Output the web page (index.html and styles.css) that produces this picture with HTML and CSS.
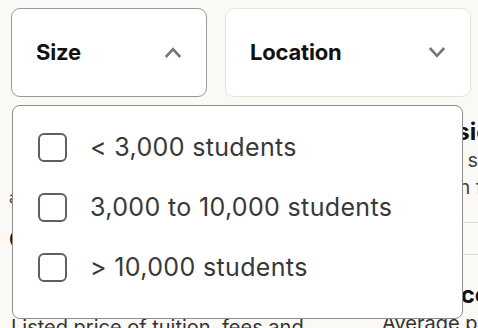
FILE: index.html
```html
<!DOCTYPE html>
<html lang="en">
<head>
    <meta charset="UTF-8">
    <title>College filters</title>
    <link rel="stylesheet" href="styles.css">
</head>
<body>
    <div class="filters">
        <button class="filter-button open">
            <span>Size</span>
            <svg width="18" height="13" viewBox="0 0 18 13"><path d="M1.8 11 L9 3.2 L16.2 11" fill="none" stroke="#767676" stroke-width="2.6"/></svg>
        </button>
        <button class="filter-button">
            <span>Location</span>
            <svg width="18" height="13" viewBox="0 0 18 13"><path d="M1.8 2 L9 9.8 L16.2 2" fill="none" stroke="#767676" stroke-width="2.6"/></svg>
        </button>
    </div>

    <div class="content">
        <div class="col">
            <p class="muted first">a private, four-year school in a city</p>
            <h3 class="heading">Cost</h3>
            <p class="small">Listed price of tuition, fees and</p>
        </div>
        <div class="col">
            <h3 class="heading top">Admissions</h3>
            <p class="muted">Share of students admitted,</p>
            <p class="muted">Based on fall undergraduates</p>
            <div class="rule"></div>
            <div class="rule"></div>
            <h3 class="heading late">Net price</h3>
            <p class="small">Average price paid</p>
        </div>
    </div>

    <div class="dropdown">
        <label class="option"><span class="box"></span>&lt; 3,000 students</label>
        <label class="option"><span class="box"></span>3,000 to 10,000 students</label>
        <label class="option"><span class="box"></span>&gt; 10,000 students</label>
    </div>
</body>
</html>
```

FILE: styles.css
```css
body {
    margin: 0;
    height: 328px;
    background-color: #faf9f5;
    font-family: 'Inter', 'Roboto', sans-serif;
    color: #121212;
    overflow: hidden;
}
.filters {
    display: flex;
    gap: 18px;
    padding: 7.5px 7px 0 11px;
}
.filter-button {
    box-sizing: border-box;
    height: 89px;
    display: flex;
    align-items: center;
    justify-content: space-between;
    padding: 0 24px 0 24px;
    background-color: white;
    border: 1.5px solid #e6e4da;
    border-radius: 9px;
    font-family: 'Inter', sans-serif;
    font-size: 22px;
    font-weight: 700;
    letter-spacing: -0.2px;
    color: #121212;
}
.filter-button:first-child {
    width: 196px;
}
.filter-button:last-child {
    width: 246px;
}
.filter-button.open {
    border-color: #999;
}
.content {
    display: grid;
    grid-template-columns: 373px 1fr;
    padding-left: 9px;
    white-space: nowrap;
}
.col p, .col h3 {
    margin: 0;
}
.heading {
    font-size: 24px;
    font-weight: 700;
    line-height: 30px;
}
.muted {
    font-size: 20px;
    color: #444;
    line-height: 27px;
}
.muted.first {
    font-size: 16px;
    line-height: 22px;
    margin-top: 89px;
}
.col:first-child .heading {
    margin-top: 17px;
}
.small {
    font-size: 20px;
    color: #333;
    line-height: 26px;
    margin-top: 59px !important;
}
.col:first-child .small {
    padding-left: 2px;
}
.heading.top {
    margin-top: 20px;
}
.rule {
    height: 1px;
    background-color: #dcdcdc;
    margin-top: 21px;
}
.rule + .rule {
    margin-top: 31px;
}
.heading.late {
    margin-top: 25px;
}
.col:last-child .small {
    margin-top: 0 !important;
}
.dropdown {
    position: absolute;
    top: 105px;
    left: 12px;
    width: 451px;
    height: 214px;
    box-sizing: border-box;
    padding: 11px 0 0 25px;
    background-color: white;
    border: 1.5px solid #8e8e8e;
    border-radius: 8px;
}
.option {
    display: flex;
    align-items: center;
    gap: 23px;
    height: 60px;
    font-size: 25px;
    letter-spacing: 0.35px;
    color: #383838;
}
.box {
    box-sizing: border-box;
    width: 29px;
    height: 29px;
    border: 2px solid #5c635d;
    border-radius: 6px;
}
```
